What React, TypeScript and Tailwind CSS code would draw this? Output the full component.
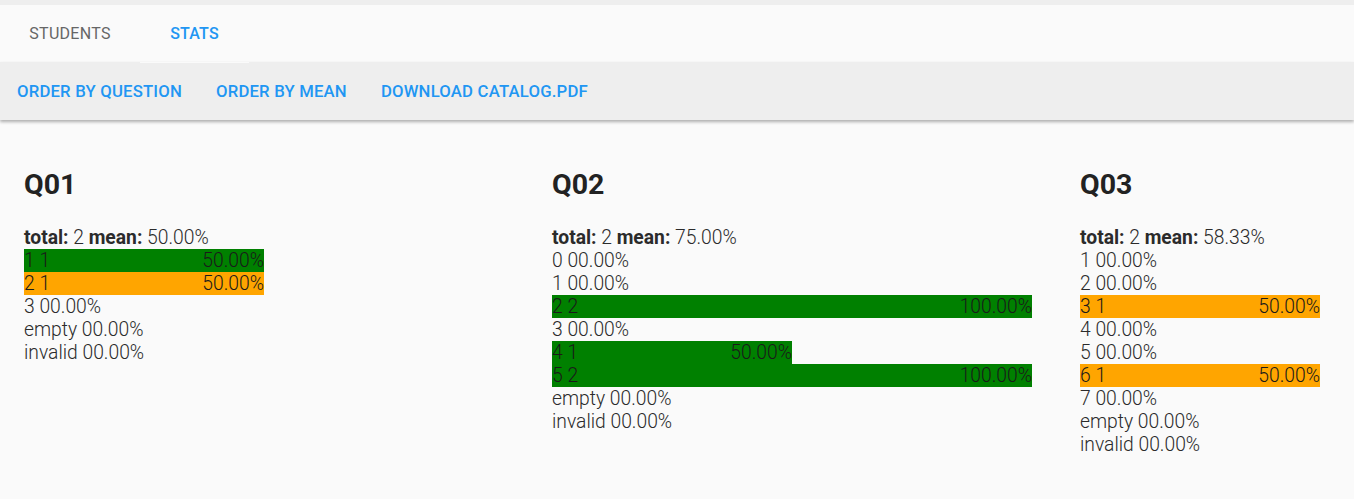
import React from "react";

type Row = { label: string; count?: number; pct: number; color?: "green" | "orange" };
type Question = { name: string; total: number; mean: string; rows: Row[] };

const questions: Question[] = [
  {
    name: "Q01",
    total: 2,
    mean: "50.00%",
    rows: [
      { label: "1", count: 1, pct: 50, color: "green" },
      { label: "2", count: 1, pct: 50, color: "orange" },
      { label: "3", pct: 0 },
      { label: "empty", pct: 0 },
      { label: "invalid", pct: 0 },
    ],
  },
  {
    name: "Q02",
    total: 2,
    mean: "75.00%",
    rows: [
      { label: "0", pct: 0 },
      { label: "1", pct: 0 },
      { label: "2", count: 2, pct: 100, color: "green" },
      { label: "3", pct: 0 },
      { label: "4", count: 1, pct: 50, color: "green" },
      { label: "5", count: 2, pct: 100, color: "green" },
      { label: "empty", pct: 0 },
      { label: "invalid", pct: 0 },
    ],
  },
  {
    name: "Q03",
    total: 2,
    mean: "58.33%",
    rows: [
      { label: "1", pct: 0 },
      { label: "2", pct: 0 },
      { label: "3", count: 1, pct: 50, color: "orange" },
      { label: "4", pct: 0 },
      { label: "5", pct: 0 },
      { label: "6", count: 1, pct: 50, color: "orange" },
      { label: "7", pct: 0 },
      { label: "empty", pct: 0 },
      { label: "invalid", pct: 0 },
    ],
  },
];

function StatRow({ row }: { row: Row }) {
  if (!row.pct) {
    return <div>{row.label} 00.00%</div>;
  }
  return (
    <div
      className={`flex justify-between text-[#1a1a1a] ${row.color === "green" ? "bg-[#008000]" : "bg-[#ffa500]"}`}
      style={{ width: `${row.pct}%` }}
    >
      <span>
        {row.label} {row.count}
      </span>
      <span>{row.pct.toFixed(2)}%</span>
    </div>
  );
}

export default function App() {
  return (
    <div className="min-h-[499px] bg-[#fafafa] overflow-hidden font-['Roboto',sans-serif]">
      <div className="h-[5px] bg-[#eeeeee]" />
      {/* Tabs */}
      <div className="flex h-[57px] bg-[#fafafa] text-[16px] font-normal">
        <div className="w-[140px] flex items-center justify-center text-[#666] tracking-[0.3px]">STUDENTS</div>
        <div className="w-[109px] flex items-center justify-center text-[#2196f3] font-medium tracking-[0.2px] border-b border-[#fafafa] -mb-px relative z-10">
          STATS
        </div>
      </div>
      {/* Toolbar */}
      <div className="h-[58px] bg-[#eeeeee] flex items-center shadow-[0_2px_3px_rgba(0,0,0,0.3)] relative">
        {["ORDER BY QUESTION", "ORDER BY MEAN", "DOWNLOAD CATALOG.PDF"].map((t) => (
          <button key={t} className="px-[17px] pt-px text-[16.7px] font-medium text-[#2196f3] tracking-[0.2px]">
            {t}
          </button>
        ))}
      </div>
      {/* Stats */}
      <div className="flex gap-12 px-6 pt-[49px]">
        {questions.map((q) => (
          <div key={q.name} className="w-[480px] shrink-0 text-[19.3px] font-light leading-[23px] text-[#2b2b2b]">
            <h2 className="text-[28.5px] font-bold text-[#222] leading-[32px] mb-[25px]">{q.name}</h2>
            <div>
              <b className="font-bold">total:</b> {q.total} <b className="font-bold">mean:</b> {q.mean}
            </div>
            {q.rows.map((r) => (
              <StatRow key={r.label} row={r} />
            ))}
          </div>
        ))}
      </div>
    </div>
  );
}
